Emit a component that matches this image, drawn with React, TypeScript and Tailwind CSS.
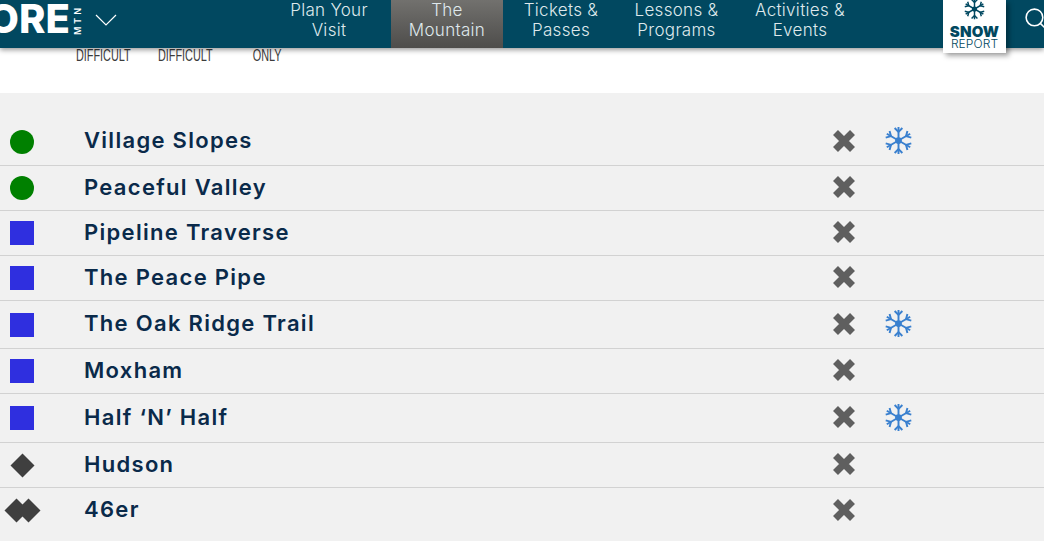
import { Search } from 'lucide-react'

const navItems = [
  { top: 'Plan Your', bottom: 'Visit', width: 'w-[124px]', active: false },
  { top: 'The', bottom: 'Mountain', width: 'w-[112px]', active: true },
  { top: 'Tickets &', bottom: 'Passes', width: 'w-[116px]', active: false },
  { top: 'Lessons &', bottom: 'Programs', width: 'w-[115px]', active: false },
  { top: 'Activities &', bottom: 'Events', width: 'w-[132px]', active: false },
]

const trails = [
  { name: 'Village Slopes', level: 'green', snow: true, height: 'h-[48px]' },
  { name: 'Peaceful Valley', level: 'green', snow: false, height: 'h-[45px]' },
  { name: 'Pipeline Traverse', level: 'blue', snow: false, height: 'h-[45px]' },
  { name: 'The Peace Pipe', level: 'blue', snow: false, height: 'h-[45px]' },
  { name: 'The Oak Ridge Trail', level: 'blue', snow: true, height: 'h-[48px]' },
  { name: 'Moxham', level: 'blue', snow: false, height: 'h-[45px]' },
  { name: 'Half ‘N’ Half', level: 'blue', snow: true, height: 'h-[49px]' },
  { name: 'Hudson', level: 'black', snow: false, height: 'h-[45px]' },
  { name: '46er', level: 'double', snow: false, height: 'h-[45px]' },
]

function Flake({ className = '' }: { className?: string }) {
  const arms = [0, 60, 120, 180, 240, 300]
  return (
    <svg viewBox="0 0 28 30" className={className} fill="none" stroke="currentColor" strokeWidth="2">
      <circle cx="14" cy="15" r="3.5" fill="currentColor" stroke="none" />
      {arms.map((a) => (
        <g key={a} transform={`rotate(${a} 14 15)`}>
          <path d="M14 15V1" />
          <path d="M10 2l4 4 4-4" />
        </g>
      ))}
    </svg>
  )
}

function Cross() {
  return (
    <svg viewBox="0 0 22 22" className="w-[22px] h-[22px] -mt-[2px] shrink-0 text-[#5f5f5f]" stroke="currentColor" strokeWidth="7">
      <path d="M2.5 2.5l17 17M19.5 2.5l-17 17" />
    </svg>
  )
}

function Diamond({ className = '' }: { className?: string }) {
  return <div className={`w-[17px] h-[17px] rotate-45 bg-[#3f3f3f] shrink-0 ${className}`} />
}

function LevelIcon({ level }: { level: string }) {
  if (level === 'green') return <div className="w-6 h-6 rounded-full bg-[#008000]" />
  if (level === 'blue') return <div className="w-6 h-6 bg-[#2f2fdf]" />
  if (level === 'black') return <Diamond />
  return (
    <div className="flex shrink-0">
      <Diamond />
      <Diamond className="-ml-[5px]" />
    </div>
  )
}

export default function App() {
  return (
    <div className="w-[1044px] h-[541px] overflow-hidden bg-white font-['Inter',sans-serif]">
      <header className="relative z-10 flex h-12 bg-[#014860] shadow-[0_2px_5px_rgba(0,0,0,0.4)] text-[#dfe8ec]">
        <div className="w-[267px] flex items-start overflow-hidden shrink-0">
          <span className="-ml-[12px] -mt-[5px] text-[40px] leading-[48px] font-extrabold text-white">
            ORE
          </span>
          <span className="ml-[3px] mt-[3px] h-[33px] rotate-180 text-center text-[9px] leading-[9px] tracking-[3px] font-semibold text-white [writing-mode:vertical-rl]">
            MTN
          </span>
          <svg viewBox="0 0 22 12" className="ml-[13px] mt-[14px] w-[22px] h-[12px] text-white" fill="none" stroke="currentColor" strokeWidth="1.2">
            <path d="M1 1l10 10L21 1" />
          </svg>
        </div>
        <nav className="flex">
          {navItems.map((item) => (
            <div
              key={item.top}
              className={`${item.width} flex flex-col items-center text-[17px] leading-[20px] tracking-[0.3px] font-light ${
                item.active ? 'bg-gradient-to-b from-[#72716e] to-[#4e4d4b]' : ''
              }`}
            >
              <span>{item.top}</span>
              <span>{item.bottom}</span>
            </div>
          ))}
        </nav>
        <div className="ml-[77px] w-[63px] h-[53px] shrink-0 bg-white shadow-[3px_3px_5px_rgba(0,0,0,0.35)] flex flex-col items-center text-[#014860]">
          <Flake className="w-[21px] h-[22px] -mt-[2px]" />
          <span className="mt-[5px] text-[15px] leading-[14px] font-black tracking-[0.2px]">SNOW</span>
          <span className="-mt-[1px] text-[12px] leading-[12px] font-light tracking-[0.1px]">REPORT</span>
        </div>
        <Search className="ml-[17px] mt-[6px] shrink-0 text-white" size={25} strokeWidth={1.5} />
      </header>

      <div className="flex h-[45px] pt-[1px] pl-[63px] font-['Liberation_Sans',sans-serif] text-[16px] leading-[14px] text-[#3c3c3c]">
        <div className="w-[80px] flex justify-center"><span className="inline-block scale-x-[0.68] whitespace-nowrap">DIFFICULT</span></div>
        <div className="w-[84px] flex justify-center"><span className="inline-block scale-x-[0.68] whitespace-nowrap">DIFFICULT</span></div>
        <div className="w-[80px] flex justify-center"><span className="inline-block scale-x-[0.68] whitespace-nowrap">ONLY</span></div>
      </div>

      <div className="bg-[#f1f1f1] pt-[25px] h-[448px]">
        {trails.map((trail, i) => (
          <div
            key={trail.name}
            className={`${trail.height} flex items-center pl-[10px] ${
              i < trails.length - 1 ? 'border-b border-[#d2d2d2]' : ''
            }`}
          >
            <div className="w-6 flex justify-center shrink-0">
              <LevelIcon level={trail.level} />
            </div>
            <div className="ml-[50px] w-[749px] pb-[2px] text-[22px] font-semibold tracking-[1.3px] text-[#0a2a4a]">
              {trail.name}
            </div>
            <Cross />
            {trail.snow && <Flake className="ml-[30px] -mt-[2px] w-[27px] h-[29px] text-[#3a80cf] shrink-0" />}
          </div>
        ))}
      </div>
    </div>
  )
}
